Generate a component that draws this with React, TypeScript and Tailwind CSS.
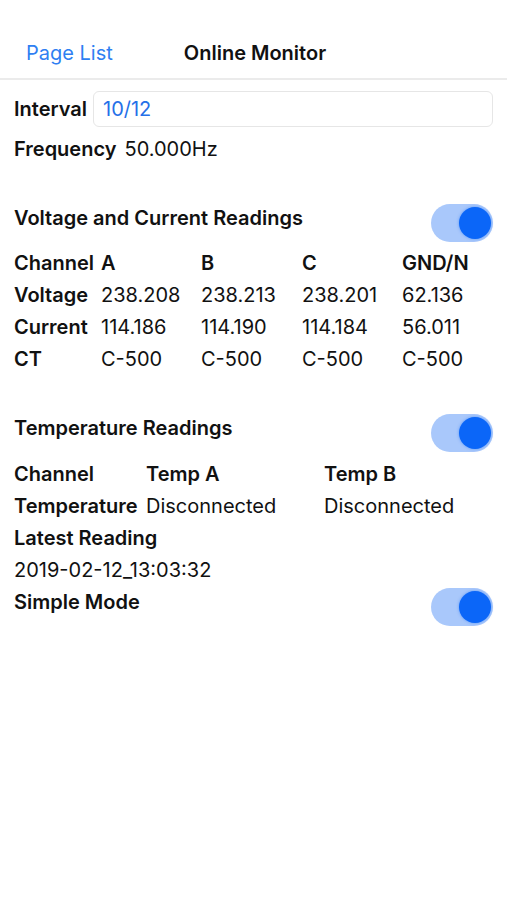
import React, { useState } from 'react';

const Toggle = ({ on, onChange }: { on: boolean; onChange: () => void }) => (
    <button
        onClick={onChange}
        className={`mt-[2px] flex h-[38px] w-[62px] items-center rounded-full px-[2px] ${on ? 'justify-end bg-[#a9c8fb]' : 'justify-start bg-[#d9d9d9]'}`}
    >
        <span className={`h-[32px] w-[32px] rounded-full shadow-[0_0_3px_rgba(11,102,248,0.5)] ${on ? 'bg-[#0b66f8]' : 'bg-white'}`} />
    </button>
);

const phases = [
    { label: 'Voltage', values: ['238.208', '238.213', '238.201', '62.136'] },
    { label: 'Current', values: ['114.186', '114.190', '114.184', '56.011'] },
    { label: 'CT', values: ['C-500', 'C-500', 'C-500', 'C-500'] },
];

const App = () => {
    const [showVc, setShowVc] = useState(true);
    const [showTemp, setShowTemp] = useState(true);
    const [simple, setSimple] = useState(true);
    const [interval, setInterval] = useState('10/12');

    return (
        <div className="min-h-[900px] w-full bg-white font-['Inter','Noto_Sans',sans-serif] text-[20px] text-[#111]">
            {/* nav bar */}
            <div className="flex h-[80px] items-start border-b-2 border-[#ebebeb] pt-[37px] leading-[32px]">
                <span className="pl-[26px] text-[#2f7ff2]">Page List</span>
                <span className="ml-[71px] font-semibold">Online Monitor</span>
            </div>

            <div className="px-[14px] pt-[11px]">
                <div className="flex h-[36px] items-center">
                    <span className="font-semibold">Interval</span>
                    <input
                        value={interval}
                        onChange={(e) => setInterval(e.target.value)}
                        className="ml-[6px] h-[36px] flex-1 rounded-[6px] border border-[#e6e6e6] px-[9px] text-[#2670e8] outline-none"
                    />
                </div>
                <div className="mt-[6px] flex leading-[32px]">
                    <span className="font-semibold">Frequency</span>
                    <span className="ml-[8px]">50.000Hz</span>
                </div>

                {/* voltage / current */}
                <div className="mt-[37px] flex h-[45px] items-start justify-between">
                    <span className="font-semibold leading-[32px]">Voltage and Current Readings</span>
                    <Toggle on={showVc} onChange={() => setShowVc(!showVc)} />
                </div>
                {showVc && (
                    <div className="grid grid-cols-[87px_100px_101px_100px_1fr] leading-[32px]">
                        <span className="font-semibold">Channel</span>
                        <span className="font-semibold">A</span>
                        <span className="font-semibold">B</span>
                        <span className="font-semibold">C</span>
                        <span className="font-semibold">GND/N</span>
                        {phases.map((row) => (
                            <React.Fragment key={row.label}>
                                <span className="font-semibold">{row.label}</span>
                                {row.values.map((v, i) => (
                                    <span key={i}>{v}</span>
                                ))}
                            </React.Fragment>
                        ))}
                    </div>
                )}

                {/* temperature */}
                <div className="mt-[37px] flex h-[46px] items-start justify-between">
                    <span className="font-semibold leading-[32px]">Temperature Readings</span>
                    <Toggle on={showTemp} onChange={() => setShowTemp(!showTemp)} />
                </div>
                {showTemp && (
                    <div className="grid grid-cols-[132px_178px_1fr] leading-[32px]">
                        <span className="font-semibold">Channel</span>
                        <span className="font-semibold">Temp A</span>
                        <span className="font-semibold">Temp B</span>
                        <span className="font-semibold">Temperature</span>
                        <span>Disconnected</span>
                        <span>Disconnected</span>
                    </div>
                )}
                <div className="font-semibold leading-[32px]">Latest Reading</div>
                <div className="leading-[32px]">2019-02-12_13:03:32</div>
                <div className="flex items-start justify-between">
                    <span className="font-semibold leading-[32px]">Simple Mode</span>
                    <Toggle on={simple} onChange={() => setSimple(!simple)} />
                </div>
            </div>
        </div>
    );
};

export default App;
